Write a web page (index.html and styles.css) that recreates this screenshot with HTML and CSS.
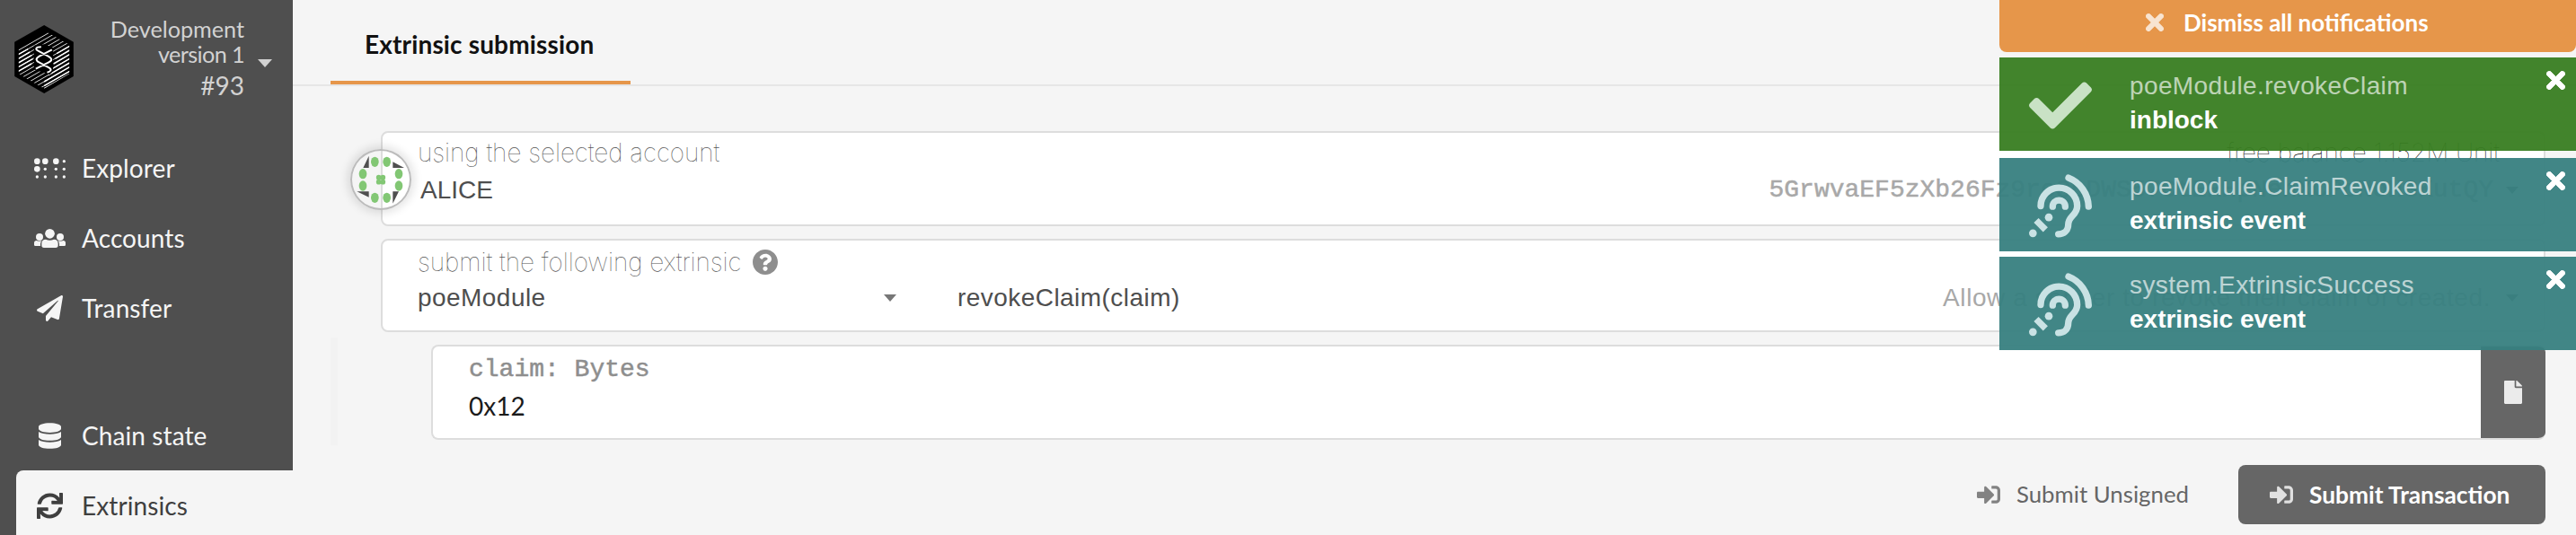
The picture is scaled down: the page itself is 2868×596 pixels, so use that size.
FILE: index.html
```html
<!DOCTYPE html>
<html lang="en">
<head>
<meta charset="utf-8">
<title>Extrinsics</title>
<link rel="stylesheet" href="styles.css">
</head>
<body>
<svg width="0" height="0" class="defs">
  <symbol id="times" viewBox="0 80 352 352"><path d="M242.72 256l100.07-100.07c12.28-12.28 12.28-32.19 0-44.48l-22.24-22.24c-12.28-12.28-32.19-12.28-44.48 0L176 189.28 75.93 89.21c-12.28-12.28-32.19-12.28-44.48 0L9.21 111.45c-12.28 12.28-12.28 32.19 0 44.48L109.28 256 9.21 356.07c-12.28 12.28-12.28 32.19 0 44.48l22.24 22.24c12.28 12.28 32.2 12.28 44.48 0L176 322.72l100.07 100.07c12.28 12.28 32.2 12.28 44.48 0l22.24-22.24c12.28-12.28 12.28-32.19 0-44.48L242.72 256z" stroke="currentColor" stroke-width="14"/></symbol>
  <symbol id="signin" viewBox="0 64 512 384"><path d="M416 448h-84c-6.6 0-12-5.4-12-12v-40c0-6.6 5.4-12 12-12h84c17.7 0 32-14.3 32-32V160c0-17.7-14.3-32-32-32h-84c-6.6 0-12-5.4-12-12V76c0-6.6 5.4-12 12-12h84c53 0 96 43 96 96v192c0 53-43 96-96 96zm-47-201L201 79c-15-15-41-4.5-41 17v96H24c-13.3 0-24 10.7-24 24v96c0 13.3 10.7 24 24 24h136v96c0 21.5 26 32 41 17l168-168c9.3-9.4 9.3-24.6 0-34z"/></symbol>
  <symbol id="listening" viewBox="0 0 210 212">
    <g fill="none" stroke="currentColor" stroke-width="22" stroke-linecap="round">
      <path d="M132 12A106 106 0 0 1 199 108"/>
      <path d="M39 106A61 61 0 0 1 161 106C161 138 131 138 131 168C131 188 116 200 98 200"/>
      <path d="M79 108A21 21 0 0 1 121 108"/>
      <path d="M24 154L55 185" stroke-linecap="butt"/>
    </g>
    <circle cx="66" cy="144" r="13"/><circle cx="13" cy="197" r="13"/>
  </symbol>
</svg>

<aside class="sidebar">
  <div class="chain">
    <svg class="logo" viewBox="19 24 197 228">
      <clipPath id="hex"><path d="M118 42L203 90V186L118 236L32 187V88Z"/></clipPath>
      <path d="M118 24L216 80V195L118 252L19 195V80Z" fill="#000"/>
      <g clip-path="url(#hex)" stroke="#fff">
        <path stroke-width="2.6" d="M32 108L203 10M32 122L203 24M32 136L203 38M32 150L203 52M32 164L203 66M32 178L203 80M32 192L203 94M32 206L203 108M32 220L203 122M32 234L203 136M32 248L203 150M32 262L203 164M32 276L203 178"/>
        <path stroke-width="4.4" d="M32 122L64 104M32 136L70 114M32 150L76 125M32 164L80 137M32 178L76 153M160 119L203 94M155 136L203 108M150 153L203 122M140 173L203 136M132 191L203 150M118 213L203 164M118 227L203 178M118 236L203 187" />
      </g>
      <path d="M84 92L118 88L148 100V178L136 190L84 172Z" fill="#000"/>
      <path d="M108 97C88 97 88 106 98 110L130 127C146 136 146 142 132 149L90 170M144 106L102 128C88 136 90 143 102 149L134 166C144 172 142 178 128 182" fill="none" stroke="#fff" stroke-width="6"/>
    </svg>
    <div class="chain-info">
      <div class="chain-name"><span>Development</span><br><span class="chain-version">version 1</span></div>
      <div class="chain-block"><span>#93</span></div>
    </div>
    <span class="caret caret-light"></span>
  </div>
  <nav class="menu">
    <a class="item"><span class="item-icon"><svg width="35" height="23" viewBox="114 525 105 69"><circle cx="124" cy="536" r="10"/><circle cx="151" cy="536" r="10"/><circle cx="187" cy="536" r="10"/><circle cx="124" cy="562" r="10"/><circle cx="214" cy="536" r="5"/><circle cx="151" cy="562" r="5"/><circle cx="187" cy="562" r="5"/><circle cx="214" cy="562" r="5"/><circle cx="124" cy="588" r="5"/><circle cx="151" cy="588" r="5"/><circle cx="187" cy="588" r="5"/><circle cx="214" cy="588" r="5"/></svg></span><span>Explorer</span></a>
    <a class="item"><span class="item-icon"><svg width="35" height="21" viewBox="114 765 105 63"><circle cx="166.500" cy="781" r="16"/><circle cx="132" cy="792" r="12"/><circle cx="201" cy="792" r="12"/><path d="M139 820V814Q139 800 153 800Q166 806 180 800Q194 800 194 814V820Q194 828 186 828H147Q139 828 139 820ZM114 818V812Q114 804 122 804Q131 807 140 804Q135 808 135 816V822H118Q114 822 114 818ZM219 818V812Q219 804 211 804Q202 807 193 804Q198 808 198 816V822H215Q219 822 219 818Z"/></svg></span><span>Accounts</span></a>
    <a class="item"><span class="item-icon"><svg width="29" height="29" viewBox="0 0 512 512"><path d="M476 3.2L12.500 270.600c-18.100 10.400-15.800 35.600 2.200 43.200L121 358.400l287.300-253.200c5.500-4.900 13.300 2.600 8.600 8.300L176 407v80.500c0 23.600 28.500 32.900 42.500 15.800L282 426l124.600 52.200c14.200 6 30.400-2.900 33-18.200l72-432C515 7.800 493.300-6.800 476 3.200z"/></svg></span><span>Transfer</span></a>
    <a class="item item-group"><span class="item-icon"><svg width="25" height="29" viewBox="0 0 448 512"><path d="M448 73.143v45.714C448 159.143 347.667 192 224 192S0 159.143 0 118.857V73.143C0 32.857 100.333 0 224 0s224 32.857 224 73.143zM448 176v102.857C448 319.143 347.667 352 224 352S0 319.143 0 278.857V176c48.125 33.143 136.208 48.572 224 48.572S399.874 209.143 448 176zm0 160v102.857C448 479.143 347.667 512 224 512S0 479.143 0 438.857V336c48.125 33.143 136.208 48.572 224 48.572S399.874 369.143 448 336z"/></svg></span><span>Chain state</span></a>
    <a class="item item-active"><span class="item-icon"><svg width="29" height="29" viewBox="0 0 512 512"><path d="M440.650 12.570l4 82.770A247.160 247.160 0 0 0 255.830 8C134.730 8 33.910 94.920 12.290 209.820A12 12 0 0 0 24.090 224h49.050a12 12 0 0 0 11.670-9.260 175.910 175.910 0 0 1 317-56.940l-101.460-4.860a12 12 0 0 0-12.570 12v47.410a12 12 0 0 0 12 12H500a12 12 0 0 0 12-12V12a12 12 0 0 0-12-12h-47.370a12 12 0 0 0-11.980 12.570zM255.830 432a175.610 175.610 0 0 1-146-77.800l101.800 4.870a12 12 0 0 0 12.570-12v-47.400a12 12 0 0 0-12-12H12a12 12 0 0 0-12 12V500a12 12 0 0 0 12 12h47.350a12 12 0 0 0 12-12.600l-4.150-82.570A247.170 247.170 0 0 0 255.830 504c121.110 0 221.930-86.920 243.550-201.820a12 12 0 0 0-11.800-14.180h-49.050a12 12 0 0 0-11.670 9.260A175.860 175.860 0 0 1 255.830 432z"/></svg></span><span>Extrinsics</span></a>
  </nav>
</aside>

<main class="main">
  <div class="tabs"><div class="tab">Extrinsic submission</div></div>

  <section class="card card-account">
    <div class="identicon">
      <svg width="68" height="68" viewBox="30 47 204 204">
        <g fill="#82c774"><ellipse cx="112" cy="90" rx="13" ry="17"/><ellipse cx="152" cy="90" rx="13" ry="17"/><ellipse cx="72" cy="130" rx="13" ry="17"/><ellipse cx="192" cy="130" rx="13" ry="17"/><ellipse cx="72" cy="170" rx="13" ry="17"/><ellipse cx="192" cy="170" rx="13" ry="17"/><ellipse cx="112" cy="210" rx="13" ry="17"/><ellipse cx="152" cy="210" rx="13" ry="17"/></g>
        <g fill="none" stroke="#82c774" stroke-width="8"><circle cx="125" cy="142" r="4.500"/><circle cx="139" cy="142" r="4.500"/><circle cx="125" cy="157" r="4.500"/><circle cx="139" cy="157" r="4.500"/></g>
        <path fill="#4f4f4f" d="M92 70V110H73ZM172 90L210 110H172ZM52 189H92V208ZM172 189H192L172 229Z"/>
      </svg>
    </div>
    <div class="label-row"><span class="label">using the selected account</span><span class="label balance">free balance 1.152M Unit</span></div>
    <div class="value-row"><span class="account">ALICE</span><span class="address">5GrwvaEF5zXb26Fz9rcQpDWS57CtERHpNehXCPcNoHGKutQY</span><span class="caret"></span></div>
  </section>

  <section class="card card-extrinsic">
    <div class="label-row"><span class="label">submit the following extrinsic</span><svg class="help" width="28" height="28" viewBox="8 8 496 496"><path d="M504 256c0 136.997-111.043 248-248 248S8 392.997 8 256C8 119.083 119.043 8 256 8s248 111.083 248 248zM262.655 90c-54.497 0-89.255 22.957-116.549 63.758-3.536 5.286-2.353 12.415 2.715 16.258l34.699 26.310c5.205 3.947 12.621 3.008 16.665-2.122 17.864-22.658 30.113-35.797 57.303-35.797 20.429 0 45.698 13.148 45.698 32.958 0 14.976-12.363 22.667-32.534 33.976C247.128 238.528 216 254.941 216 296v4c0 6.627 5.373 12 12 12h56c6.627 0 12-5.373 12-12v-1.333c0-28.462 83.186-29.647 83.186-106.667 0-58.002-60.165-102-116.531-102zM256 338c-25.365 0-46 20.635-46 46 0 25.364 20.635 46 46 46s46-20.636 46-46c0-25.365-20.635-46-46-46z"/></svg></div>
    <div class="value-row">
      <div class="module"><span>poeModule</span><span class="caret"></span></div>
      <span>revokeClaim(claim)</span><span class="hint">Allow a sender to revoke their claim of created.</span><span class="caret"></span>
    </div>
  </section>

  <div class="params">
    <section class="card card-param">
      <div class="param-body">
        <div class="param-label">claim: Bytes</div>
        <div class="param-value">0x12</div>
      </div>
      <button class="file"><svg width="20" height="26" viewBox="0 0 384 512" preserveAspectRatio="none"><path d="M224 136V0H24C10.700 0 0 10.700 0 24v464c0 13.300 10.700 24 24 24h336c13.300 0 24-10.700 24-24V160H248c-13.200 0-24-10.800-24-24zm160-14.100v6.100H256V0h6.100c6.400 0 12.500 2.500 17 7l97.900 98c4.500 4.500 7 10.600 7 16.900z"/></svg></button>
    </section>
  </div>

  <div class="actions">
    <button class="btn"><svg width="26" height="20"><use href="#signin"/></svg><span>Submit Unsigned</span></button>
    <button class="btn btn-primary"><svg width="26" height="20"><use href="#signin"/></svg><span>Submit Transaction</span></button>
  </div>
</main>

<div class="toasts">
  <button class="dismiss"><svg width="20" height="20"><use href="#times"/></svg><span>Dismiss all notifications</span></button>
  <div class="toast toast-success">
    <svg class="toast-icon" viewBox="0 0 512 512"><path d="M173.898 439.404l-166.400-166.400c-9.997-9.997-9.997-26.206 0-36.204l36.203-36.204c9.997-9.998 26.207-9.998 36.204 0L192 312.690 432.095 72.596c9.997-9.997 26.207-9.997 36.204 0l36.203 36.204c9.997 9.997 9.997 26.206 0 36.204l-294.400 294.401c-9.998 9.997-26.207 9.997-36.204-.001z"/></svg>
    <div class="toast-text"><div class="toast-title">poeModule.revokeClaim</div><div class="toast-status">inblock</div></div>
    <svg class="close" width="21" height="21"><use href="#times"/></svg>
  </div>
  <div class="toast">
    <svg class="toast-icon"><use href="#listening"/></svg>
    <div class="toast-text"><div class="toast-title">poeModule.ClaimRevoked</div><div class="toast-status">extrinsic event</div></div>
    <svg class="close" width="21" height="21"><use href="#times"/></svg>
  </div>
  <div class="toast toast-last">
    <svg class="toast-icon"><use href="#listening"/></svg>
    <div class="toast-text"><div class="toast-title">system.ExtrinsicSuccess</div><div class="toast-status">extrinsic event</div></div>
    <svg class="close" width="21" height="21"><use href="#times"/></svg>
  </div>
</div>
</body>
</html>
```

FILE: styles.css
```css
* { box-sizing: border-box; }
body {
  margin: 0;
  width: 2868px;
  height: 596px;
  overflow: hidden;
  display: flex;
  position: relative;
  background: #f5f5f5;
  font: 28px/1 Lato, sans-serif;
  color: #4e4e4e;
}
svg { display: block; fill: currentColor; flex: none; }
.defs { position: absolute; }
span { white-space: nowrap; }
button { border: 0; background: none; padding: 0; font: inherit; color: inherit; }

.sidebar { width: 326px; height: 596px; flex: none; background: #4f4f4f; color: #f5f5f5; overflow: hidden; }
.chain { height: 148px; display: flex; align-items: flex-start; padding: 18px 23px 0 16px; color: #d2d2d2; }
.logo { width: 66px; height: 76px; margin-top: 10px; }
.chain-info { flex: 1; text-align: right; margin-right: 15px; }
.chain-name { font-size: 25.2px; line-height: 28px; }
.chain-version { letter-spacing: -.6px; }
.chain-block { line-height: 42px; }
.caret { width: 14px; height: 8px; flex: none; background: #777; clip-path: polygon(0 0, 100% 0, 50% 100%); }
.caret-light { width: 16px; height: 9px; margin-top: 48px; background: #d2d2d2; }
.item { display: flex; align-items: center; height: 78px; padding-left: 38px; line-height: 78px; letter-spacing: .1px; }
.item-icon { width: 35px; margin-right: 18px; display: flex; justify-content: center; flex: none; }
.item-group { margin-top: 64px; }
.item-active { margin-left: 18px; padding-left: 20px; border-radius: 8px 0 0 0; background: #f5f5f5; color: #3f3f3f; }

.main { flex: 1; min-width: 0; }
.tabs { height: 96px; padding-left: 42px; border-bottom: 2px solid #e6e6e6; }
.tab { width: 334px; height: 94px; padding: 9px 0 0 38px; border-bottom: 4px solid #e6964a; font-weight: 700; line-height: 80px; letter-spacing: .15px; color: #111; }

.card { background: #fff; border: 2px solid #ddd; border-radius: 8px; font-family: "Liberation Sans", Arial, sans-serif; }
.card-account, .card-extrinsic { height: 106px; margin: 50px 34px 0 98px; padding: 8px 28px 0 39px; position: relative; }
.card-extrinsic { height: 104px; margin-top: 14px; padding-top: 10px; }
.label-row { display: flex; height: 28px; line-height: 28px; }
.label { font-family: Inter, sans-serif; font-weight: 100; letter-spacing: -.05px; color: #555; }
.balance { margin-left: auto; margin-right: 21px; color: #222; }
.help { margin-left: 12px; color: #8e8e8e; }
.value-row { display: flex; align-items: center; height: 56px; line-height: 56px; letter-spacing: .45px; }
.card-extrinsic .value-row { height: 52px; line-height: 52px; }
.account { margin-left: 3px; letter-spacing: 0; }
.address, .hint { margin-left: auto; margin-right: 17px; color: #a8a8a8; }
.hint { letter-spacing: .58px; }
.address { margin-right: 14px; font-family: "Courier New", "Liberation Mono", monospace; letter-spacing: 0; -webkit-text-stroke: .5px currentColor; }
.module { width: 601px; display: flex; align-items: center; justify-content: space-between; padding-right: 68px; }
.identicon { position: absolute; left: -36px; top: 18px; width: 68px; height: 68px; border-radius: 50%; box-shadow: 0 0 10px 4px rgba(0, 0, 0, .1), inset 0 0 0 2px #bcbcbc; }

.params { margin: 6px 34px 0 42px; height: 120px; padding: 8px 0 0 104px; border-left: 8px solid #f2f2f2; }
.card-param { height: 106px; display: flex; overflow: hidden; border-right: 0; }
.param-body { flex: 1; padding: 10px 0 0 40px; }
.param-label { height: 28px; line-height: 31px; font-family: "Courier New", "Liberation Mono", monospace; color: #8e8e8e; -webkit-text-stroke: .5px currentColor; }
.param-value { height: 56px; line-height: 56px; font-family: Lato, sans-serif; color: #1b1b1b; }
.file { width: 72px; margin: -2px 0; background: #666; color: #ebebeb; display: flex; align-items: center; justify-content: center; }

.actions { display: flex; justify-content: flex-end; gap: 15px; margin: 22px 34px 0 0; }
.btn { height: 66px; padding: 0 40px 0 35px; display: flex; align-items: center; gap: 18px; border-radius: 8px; font-size: 25.8px; color: #666; }
.btn svg { opacity: .8; }
.btn-primary { width: 342px; background: #666; color: #fff; font-size: 26.3px; font-weight: 700; }

.toasts { position: absolute; left: 2226px; top: 0; width: 642px; color: #fff; font-family: "Liberation Sans", Arial, sans-serif; }
.dismiss { display: flex; align-items: flex-start; width: 642px; height: 58px; padding: 15px 0 0 163px; gap: 22px; border-radius: 0 0 8px 8px; background: #e6964a; color: #fff; font: 700 26px/20px Lato, sans-serif; }
.dismiss svg { opacity: .75; }
.toast { display: flex; height: 104px; margin-bottom: 8px; padding: 0 12px 0 33px; background: rgba(55, 127, 127, .95); }
.toast-success { margin-top: 6px; background: rgba(56, 125, 33, .95); }
.toast-last { margin-top: -2px; }
.toast-icon { width: 70px; height: 71px; margin: 18px 42px 0 0; color: #c9e2e4; }
.toast-success .toast-icon { color: #c9e2c5; }
.toast-text { flex: 1; padding-top: 13px; line-height: 38px; }
.toast-title { letter-spacing: .38px; opacity: .65; }
.toast-status { font-weight: 700; }
.close { margin-top: 15px; }
```
